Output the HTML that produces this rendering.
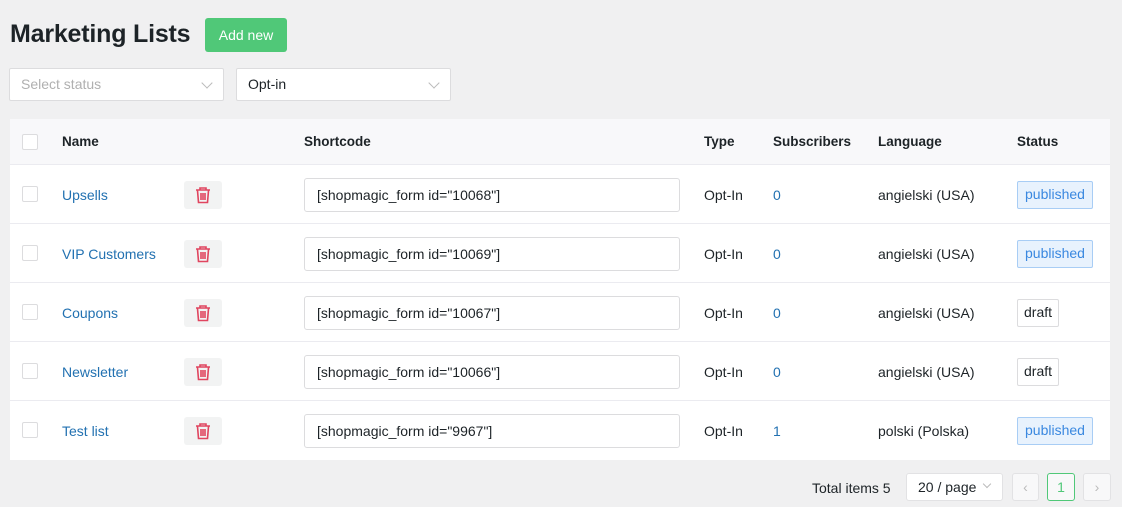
<!DOCTYPE html>
<html><head><meta charset="utf-8"><style>
*{box-sizing:border-box;margin:0;padding:0}
body{width:1122px;height:507px;background:#f0f0f1;font-family:"Liberation Sans",sans-serif;font-size:14px;color:#1d2327;position:relative;overflow:hidden}
.a{position:absolute}
h1{position:absolute;left:10px;top:20px;font-size:25px;font-weight:bold;color:#1d2327;letter-spacing:-0.2px}
.btn{left:205px;top:18px;width:82px;height:34px;background:#50c878;border-radius:3px;color:#fff;font-size:14px;text-align:center;line-height:34px}
.sel{top:68px;height:33px;background:#fff;border:1px solid #dcdcde;border-radius:2px;line-height:31px;padding-left:11px}
.chev{position:absolute;right:12px;top:10px;width:8px;height:8px;border-right:1px solid #bbb;border-bottom:1px solid #bbb;transform:rotate(45deg)}
.tbl{left:10px;top:119px;width:1100px;height:341px;background:#fff}
.hd{left:0;top:0;width:1100px;height:46px;background:#f8f8fa;border-bottom:1px solid #ebebf0}
.th{font-weight:bold;top:15px;font-size:13.5px}
.cb{width:16px;height:16px;border:1px solid #dcdcde;border-radius:2px;background:#fff}
.row{left:0;width:1100px;height:59px;border-bottom:1px solid #ebebf0}
.row .t{top:22px}
.lnk{color:#2271b1}
.del{left:174px;top:16px;width:38px;height:28px;background:#f2f3f3;border-radius:3px}
.sc{left:294px;top:13px;width:376px;height:34px;border:1px solid #dcdcde;border-radius:3px;line-height:32px;padding-left:12px}
.pub{left:1007px;top:16px;height:28px;padding:0 7px;line-height:25px;background:#e8f2fd;border:1px solid #a8cdf5;border-radius:2px;color:#3a88e0}
.dr{left:1007px;top:16px;height:28px;padding:0 6px;line-height:25px;background:#fff;border:1px solid #dcdcde;border-radius:2px}
.pg{top:473px;height:28px;border:1px solid #e2e2e4;border-radius:3px;background:#f8f8f9}
</style></head><body>
<h1>Marketing Lists</h1>
<div class="a btn">Add new</div>
<div class="a sel" style="left:9px;width:215px;color:#b0b0b0">Select status<span class="chev"></span></div>
<div class="a sel" style="left:236px;width:215px">Opt-in<span class="chev"></span></div>
<div class="a tbl">
<div class="a hd">
<div class="a cb" style="left:12px;top:15px"></div>
<div class="a th" style="left:52px">Name</div>
<div class="a th" style="left:294px">Shortcode</div>
<div class="a th" style="left:694px">Type</div>
<div class="a th" style="left:763px">Subscribers</div>
<div class="a th" style="left:868px">Language</div>
<div class="a th" style="left:1007px">Status</div>
</div>
<div class="a row" style="top:46px"><div class="a cb" style="left:12px;top:21px"></div><div class="a t lnk" style="left:52px">Upsells</div><div class="a del"><svg width="38" height="28"><g fill="none" stroke="#e0455f" stroke-width="1.6"><path d="M12 9h14M16 9V7h6v2M13.5 9.5l1 12h9l1-12M17 12v7M19 12v7M21 12v7"/></g></svg></div><div class="a sc">[shopmagic_form id="10068"]</div><div class="a t" style="left:694px">Opt-In</div><div class="a t lnk" style="left:763px">0</div><div class="a t" style="left:868px">angielski (USA)</div><div class="a pub">published</div></div>
<div class="a row" style="top:105px"><div class="a cb" style="left:12px;top:21px"></div><div class="a t lnk" style="left:52px">VIP Customers</div><div class="a del"><svg width="38" height="28"><g fill="none" stroke="#e0455f" stroke-width="1.6"><path d="M12 9h14M16 9V7h6v2M13.5 9.5l1 12h9l1-12M17 12v7M19 12v7M21 12v7"/></g></svg></div><div class="a sc">[shopmagic_form id="10069"]</div><div class="a t" style="left:694px">Opt-In</div><div class="a t lnk" style="left:763px">0</div><div class="a t" style="left:868px">angielski (USA)</div><div class="a pub">published</div></div>
<div class="a row" style="top:164px"><div class="a cb" style="left:12px;top:21px"></div><div class="a t lnk" style="left:52px">Coupons</div><div class="a del"><svg width="38" height="28"><g fill="none" stroke="#e0455f" stroke-width="1.6"><path d="M12 9h14M16 9V7h6v2M13.5 9.5l1 12h9l1-12M17 12v7M19 12v7M21 12v7"/></g></svg></div><div class="a sc">[shopmagic_form id="10067"]</div><div class="a t" style="left:694px">Opt-In</div><div class="a t lnk" style="left:763px">0</div><div class="a t" style="left:868px">angielski (USA)</div><div class="a dr">draft</div></div>
<div class="a row" style="top:223px"><div class="a cb" style="left:12px;top:21px"></div><div class="a t lnk" style="left:52px">Newsletter</div><div class="a del"><svg width="38" height="28"><g fill="none" stroke="#e0455f" stroke-width="1.6"><path d="M12 9h14M16 9V7h6v2M13.5 9.5l1 12h9l1-12M17 12v7M19 12v7M21 12v7"/></g></svg></div><div class="a sc">[shopmagic_form id="10066"]</div><div class="a t" style="left:694px">Opt-In</div><div class="a t lnk" style="left:763px">0</div><div class="a t" style="left:868px">angielski (USA)</div><div class="a dr">draft</div></div>
<div class="a row" style="top:282px;border-bottom:none"><div class="a cb" style="left:12px;top:21px"></div><div class="a t lnk" style="left:52px">Test list</div><div class="a del"><svg width="38" height="28"><g fill="none" stroke="#e0455f" stroke-width="1.6"><path d="M12 9h14M16 9V7h6v2M13.5 9.5l1 12h9l1-12M17 12v7M19 12v7M21 12v7"/></g></svg></div><div class="a sc">[shopmagic_form id="9967"]</div><div class="a t" style="left:694px">Opt-In</div><div class="a t lnk" style="left:763px">1</div><div class="a t" style="left:868px">polski (Polska)</div><div class="a pub">published</div></div>
</div>
<div class="a" style="left:812px;top:480px">Total items 5</div>
<div class="a" style="left:906px;top:473px;width:97px;height:28px;background:#fff;border:1px solid #e2e2e4;border-radius:3px;line-height:26px;padding-left:11px">20 / page<span class="chev" style="top:7px;right:12px;width:6px;height:6px"></span></div>
<div class="a pg" style="left:1012px;width:27px;color:#bbb;text-align:center;line-height:26px">‹</div>
<div class="a pg" style="left:1047px;width:28px;border-color:#50c878;color:#50c878;text-align:center;line-height:26px;background:#f8f8f9">1</div>
<div class="a pg" style="left:1083px;width:28px;color:#bbb;text-align:center;line-height:26px">›</div>
</body></html>
